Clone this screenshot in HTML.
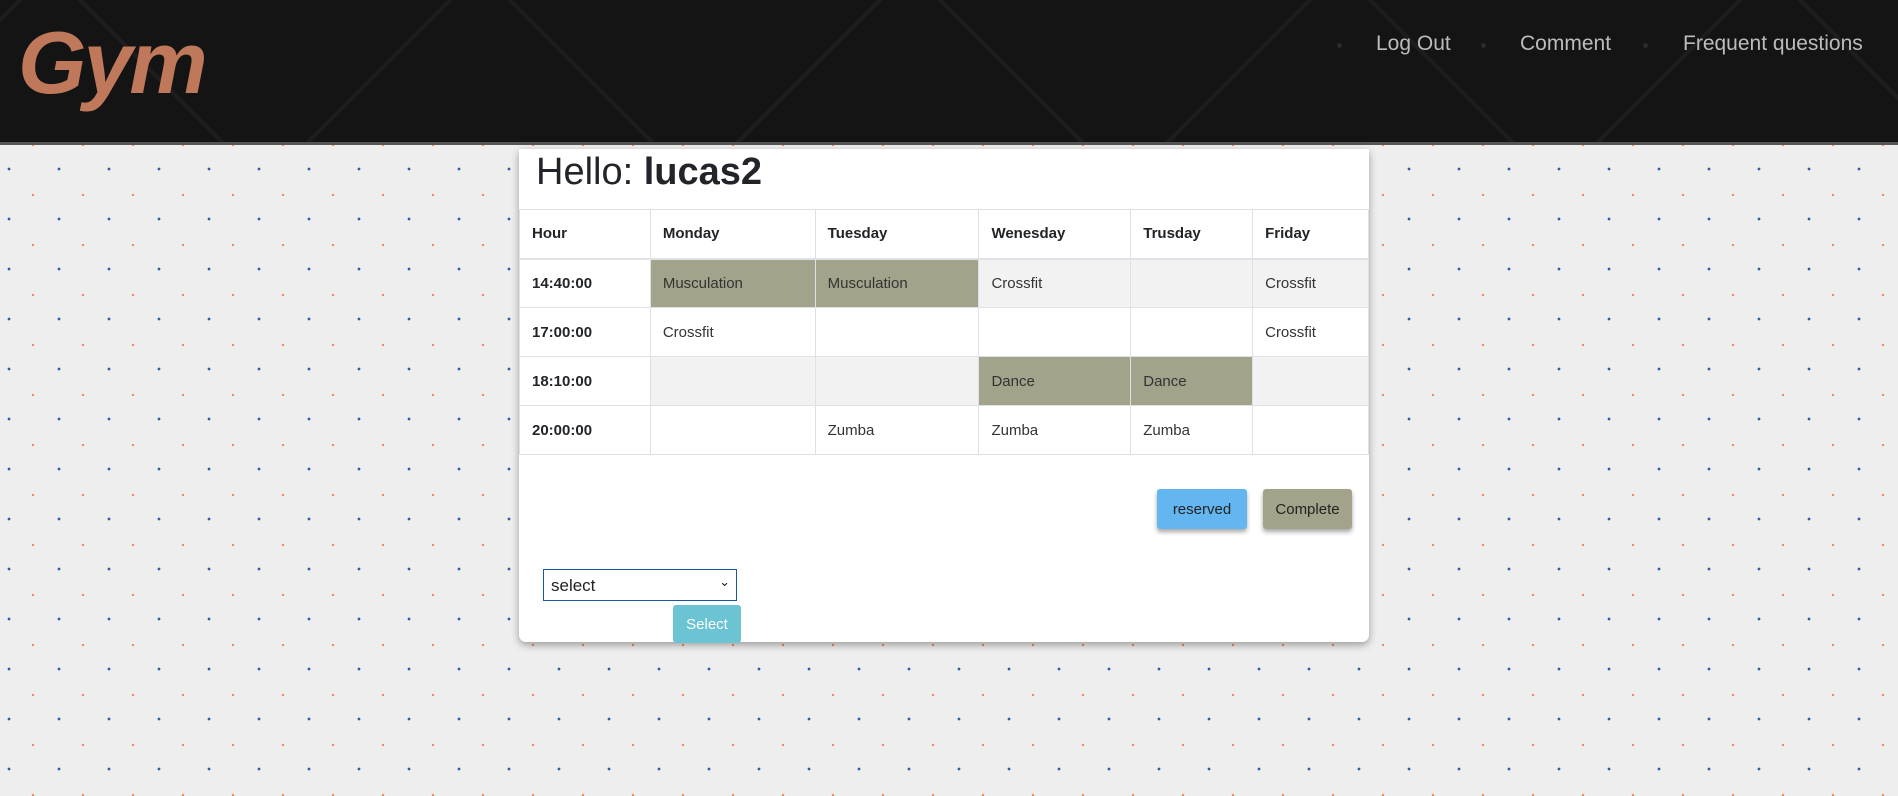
<!DOCTYPE html>
<html><head><meta charset="utf-8"><style>
*{margin:0;padding:0;box-sizing:border-box}
html,body{width:1898px;height:796px;overflow:hidden}
body{font-family:"Liberation Sans",sans-serif;background-color:#eeeeee;
background-image:radial-gradient(circle,#2a62a8 1.2px,transparent 1.6px),radial-gradient(circle,#f08a5d 1px,transparent 1.4px);
background-size:50px 50px,50px 50px;background-position:-16px 144px,8px 170px;position:relative}
.hdr{position:absolute;left:0;top:0;width:1898px;height:145px;background:#141414;border-bottom:3px solid #555;overflow:hidden}
.logo{position:absolute;left:18px;top:12px;font:italic bold 88px "Liberation Sans",sans-serif;color:#c0785a;letter-spacing:-3px}
.nav{position:absolute;top:32px;font-size:21px;color:#bcbcbc}
.dot{position:absolute;top:43px;width:5px;height:5px;border-radius:50%;background:#2a2a2a}
.card{position:absolute;left:519px;top:149px;width:850px;height:493px;background:#fff;border-radius:0 0 7px 7px;box-shadow:0 3px 8px rgba(0,0,0,.35)}
h1{position:absolute;left:17px;top:2px;font-size:38px;font-weight:normal;color:#212529}
table{position:absolute;left:0;top:60px;border-collapse:collapse;width:850px}
td,th{border:1px solid #dee2e6;height:49px;padding:0 12px;font-size:15px;color:#333;text-align:left}
th{font-weight:bold;color:#212529}
thead th{border-bottom:2px solid #dee2e6}
tr.s td{background:#f2f2f2}
td.h{background:#a3a38b !important}
.btn{position:absolute;height:40px;border-radius:3px;font-size:15px;color:#222;display:flex;align-items:center;justify-content:center;box-shadow:0 3px 5px rgba(0,0,0,.35)}
</style></head><body>
<div class="hdr">
<svg width="1898" height="145" style="position:absolute;left:0;top:0">
<defs><pattern id="p" width="430" height="430" patternUnits="userSpaceOnUse" x="50" y="-30"><path d="M0 0L430 430M430 0L0 430" stroke="#1d1d1d" stroke-width="4" fill="none"/></pattern></defs>
<rect width="1898" height="145" fill="url(#p)"/></svg>
<div class="logo">Gym</div>
<div class="dot" style="left:1337px"></div><div class="nav" style="left:1376px">Log Out</div>
<div class="dot" style="left:1481px"></div><div class="nav" style="left:1520px">Comment</div>
<div class="dot" style="left:1643px"></div><div class="nav" style="left:1683px">Frequent questions</div>
</div>
<div class="card">
<h1>Hello: <b>lucas2</b></h1>
<table>
<colgroup><col style="width:131px"><col style="width:165px"><col style="width:164px"><col style="width:152px"><col style="width:122px"><col style="width:116px"></colgroup>
<thead><tr><th>Hour</th><th>Monday</th><th>Tuesday</th><th>Wenesday</th><th>Trusday</th><th>Friday</th></tr></thead>
<tbody>
<tr class="s"><th>14:40:00</th><td class="h">Musculation</td><td class="h">Musculation</td><td>Crossfit</td><td></td><td>Crossfit</td></tr>
<tr><th>17:00:00</th><td>Crossfit</td><td></td><td></td><td></td><td>Crossfit</td></tr>
<tr class="s"><th>18:10:00</th><td></td><td></td><td class="h">Dance</td><td class="h">Dance</td><td></td></tr>
<tr><th>20:00:00</th><td></td><td>Zumba</td><td>Zumba</td><td>Zumba</td><td></td></tr>
</tbody></table>
<div class="btn" style="left:638px;top:340px;width:90px;background:#63b6ef">reserved</div>
<div class="btn" style="left:744px;top:340px;width:89px;background:#a3a38b">Complete</div>
<div style="position:absolute;left:24px;top:420px;width:194px;height:32px;border:1px solid #1a56a0;font-size:17px;color:#222;padding:6px 7px">select<span style="position:absolute;right:6px;top:4px;font-size:13px">&#8964;</span></div>
<div style="position:absolute;left:154px;top:456px;width:68px;height:38px;background:#6ac4d3;color:#fff;font-size:15px;border-radius:3px;display:flex;align-items:center;justify-content:center">Select</div>
</div>
</body></html>
